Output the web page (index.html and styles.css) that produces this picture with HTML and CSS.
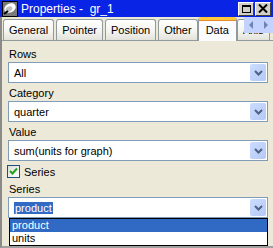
FILE: index.html
```html
<!DOCTYPE html>
<html>
<head>
<meta charset="utf-8">
<link rel="stylesheet" href="styles.css">
</head>
<body>
<div class="window">
  <div class="titlebar">
    <svg class="app-icon" width="16" height="16" viewBox="0 0 16 16">
      <rect x="0" y="0" width="16" height="16" fill="#000"/>
      <rect x="1" y="1" width="14" height="14" fill="#7b7b7b"/>
      <ellipse cx="8" cy="7" rx="6" ry="4.5" fill="#fff" transform="rotate(-25 8 7)"/>
      <ellipse cx="7" cy="8" rx="3.5" ry="2.5" fill="#c0c0c0" transform="rotate(-25 7 8)"/>
      <path d="M2 13 L6 10" stroke="#000" stroke-width="2"/>
    </svg>
    <span class="title">Properties -&nbsp; gr_1</span>
    <div class="caption-buttons">
      <span class="cbtn"><span class="max-glyph"></span></span>
      <span class="cbtn">
        <svg width="10" height="9" viewBox="0 0 10 9"><path d="M1 0.5 L9 8.5 M9 0.5 L1 8.5" stroke="#000" stroke-width="2"/></svg>
      </span>
    </div>
  </div>
  <div class="frame">
    <div class="tabstrip">
      <div class="tab">General</div>
      <div class="tab">Pointer</div>
      <div class="tab">Position</div>
      <div class="tab">Other</div>
      <div class="tab active">Data</div>
      <div class="tab">Axis</div>
      <div class="tab-scroller">
        <svg width="8" height="8" viewBox="0 0 8 8"><path d="M6 0 L2 4 L6 8 Z" fill="#6e83b5"/></svg>
        <svg width="8" height="8" viewBox="0 0 8 8"><path d="M2 0 L6 4 L2 8 Z" fill="#6e83b5"/></svg>
      </div>
    </div>
    <div class="panel">
      <div class="field-label">Rows</div>
      <div class="combo">
        <span class="combo-text">All</span>
        <span class="combo-btn"><svg width="9" height="6" viewBox="0 0 9 6"><path d="M1 1 L4.5 4.5 L8 1" stroke="#4d6185" stroke-width="2" fill="none"/></svg></span>
      </div>
      <div class="field-label">Category</div>
      <div class="combo">
        <span class="combo-text">quarter</span>
        <span class="combo-btn"><svg width="9" height="6" viewBox="0 0 9 6"><path d="M1 1 L4.5 4.5 L8 1" stroke="#4d6185" stroke-width="2" fill="none"/></svg></span>
      </div>
      <div class="field-label">Value</div>
      <div class="combo">
        <span class="combo-text">sum(units for graph)</span>
        <span class="combo-btn"><svg width="9" height="6" viewBox="0 0 9 6"><path d="M1 1 L4.5 4.5 L8 1" stroke="#4d6185" stroke-width="2" fill="none"/></svg></span>
      </div>
      <div class="check-row">
        <span class="checkbox"><svg width="9" height="9" viewBox="0 0 9 9"><path d="M1 4 L3.5 6.5 L8 1.5" stroke="#21a121" stroke-width="2" fill="none"/></svg></span>
        <span>Series</span>
      </div>
      <div class="field-label">Series</div>
      <div class="combo combo-open">
        <span class="combo-text"><span class="selected-text">product</span></span>
        <span class="combo-btn"><svg width="9" height="6" viewBox="0 0 9 6"><path d="M1 1 L4.5 4.5 L8 1" stroke="#4d6185" stroke-width="2" fill="none"/></svg></span>
      </div>
      <ul class="dropdown">
        <li class="option selected">product</li>
        <li class="option">units</li>
      </ul>
    </div>
  </div>
</div>
</body>
</html>
```

FILE: styles.css
```css
body {
  margin: 0;
  font-family: "Liberation Sans", Arial, sans-serif;
  font-size: 11px;
  color: #000;
}
.window {
  width: 273px;
  height: 248px;
  background: #ece9d8;
  display: flex;
  flex-direction: column;
  overflow: hidden;
}
.titlebar {
  height: 17px;
  background: #0a24e6;
  display: flex;
  align-items: center;
  padding-left: 2px;
  flex: none;
}
.app-icon {
  display: block;
  flex: none;
}
.title {
  color: #fff;
  font-size: 12px;
  margin-left: 3px;
  white-space: nowrap;
}
.caption-buttons {
  margin-left: auto;
  display: flex;
  gap: 1px;
  padding-right: 2px;
}
.cbtn {
  width: 16px;
  height: 14px;
  box-sizing: border-box;
  background: #d4d0c8;
  border: 1px solid;
  border-color: #fff #404040 #404040 #fff;
  display: flex;
  align-items: center;
  justify-content: center;
}
.max-glyph {
  width: 9px;
  height: 8px;
  box-sizing: border-box;
  border: 1px solid #000;
  border-top-width: 2px;
}
.frame {
  flex: 1;
  display: flex;
  flex-direction: column;
  border-left: 2px solid #8a8a8a;
  border-bottom: 2px solid #a0a0a0;
}
.tabstrip {
  height: 23px;
  display: flex;
  align-items: flex-end;
  padding-left: 1px;
  gap: 2px;
  position: relative;
  border-bottom: 1px solid #919b9c;
  flex: none;
}
.tab {
  height: 21px;
  box-sizing: border-box;
  padding: 0 5px;
  line-height: 20px;
  border: 1px solid #919b9c;
  border-bottom: none;
  border-radius: 3px 3px 0 0;
  background: linear-gradient(#ffffff, #f3f3ef 60%, #e3e2da);
  white-space: nowrap;
  flex: none;
}
.tab.active {
  height: 24px;
  margin: 0 -2px -1px -2px;
  padding: 0 7px;
  line-height: 21px;
  background: #fcfcfe;
  border-top: 3px solid #ffc83c;
  box-shadow: inset 0 1px 0 #e68b2c;
  position: relative;
}
.tab-scroller {
  position: absolute;
  right: 0;
  top: 0;
  width: 29px;
  height: 16px;
  background: #c3d3fd;
  display: flex;
  align-items: center;
  justify-content: space-around;
}
.panel {
  flex: 1;
  padding: 7px 5px 0 6px;
  display: flex;
  flex-direction: column;
}
.field-label {
  line-height: 13px;
  height: 13px;
  margin-bottom: 1px;
  padding-left: 1px;
}
.combo {
  height: 21px;
  box-sizing: border-box;
  border: 1px solid #7f9db9;
  background: #fff;
  display: flex;
  align-items: center;
  margin-bottom: 4px;
  flex: none;
}
.combo.combo-open {
  margin-bottom: 0;
}
.combo-text {
  flex: 1;
  padding-left: 5px;
}
.selected-text {
  background: #316ac5;
  color: #fff;
  padding: 0 1px;
}
.combo-btn {
  width: 16px;
  height: 17px;
  margin-right: 1px;
  border-radius: 2px;
  background: linear-gradient(135deg, #cbdcfd, #b5c9f7);
  display: flex;
  align-items: center;
  justify-content: center;
}
.check-row {
  display: flex;
  align-items: center;
  gap: 4px;
  height: 13px;
  margin-bottom: 5px;
  margin-left: -1px;
  flex: none;
}
.checkbox {
  width: 13px;
  height: 13px;
  box-sizing: border-box;
  border: 1px solid #1c5180;
  background: linear-gradient(135deg, #dcdcd7, #fff);
  display: flex;
  align-items: center;
  justify-content: center;
}
.dropdown {
  list-style: none;
  margin: 0 0 0 1px;
  padding: 0;
  border: 1px solid #000;
  background: #fff;
  flex: none;
}
.option {
  height: 13px;
  line-height: 13px;
  padding-left: 2px;
}
.option.selected {
  background: #316ac5;
  color: #fff;
}
```
